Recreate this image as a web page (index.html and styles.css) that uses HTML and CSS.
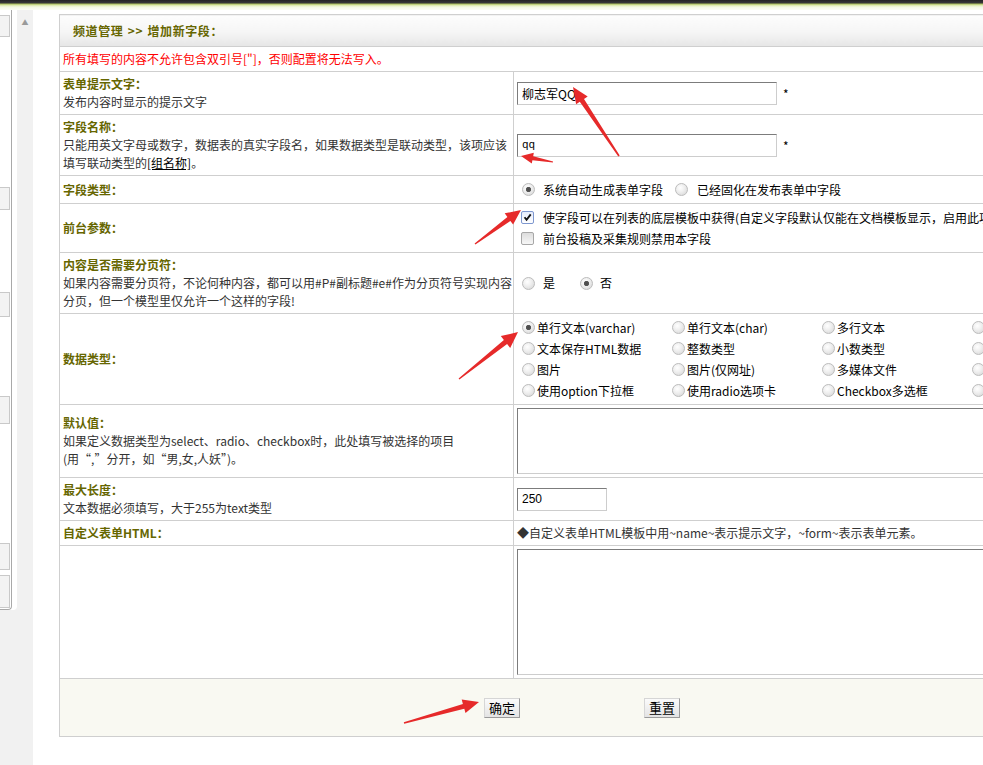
FILE: index.html
```html
<!DOCTYPE html>
<html lang="zh-CN">
<head>
<meta charset="utf-8">
<title>增加新字段</title>
<link rel="stylesheet" href="styles.css">
</head>
<body>
<div class="topbar"></div>
<div class="frame">
  <aside class="side">
    <div class="panel">
      <div class="panel-in">
        <span class="pbtn p1"></span>
        <span class="pbtn p2"></span>
        <span class="pbtn p3"></span>
        <span class="pbtn p4"></span>
        <span class="pbtn p5"></span>
        <span class="pbtn p6"></span>
      </div>
    </div>
    <div class="strip"><span class="up">▲</span></div>
  </aside>
  <main class="main">
    <table class="form">
      <colgroup><col class="c1"><col class="c2"></colgroup>
      <tr class="hd"><td colspan="2">频道管理 <span class="sep">&gt;&gt;</span> 增加新字段：</td></tr>
      <tr class="notice"><td colspan="2">所有填写的内容不允许包含双引号["]，否则配置将无法写入。</td></tr>
      <tr>
        <td><span class="lb">表单提示文字：</span><span class="ds">发布内容时显示的提示文字</span></td>
        <td><input class="txt" type="text" value="柳志军QQ"><span class="req">*</span></td>
      </tr>
      <tr>
        <td><span class="lb">字段名称：</span><span class="ds">只能用英文字母或数字，数据表的真实字段名，如果数据类型是联动类型，该项应该</span><span class="ds">填写联动类型的<a class="lnk" href="#">[组名称]</a>。</span></td>
        <td><input class="txt mono" type="text" value="qq"><span class="req">*</span></td>
      </tr>
      <tr>
        <td><span class="lb">字段类型：</span></td>
        <td>
          <div class="line">
            <input class="rd ft1" type="radio" name="ftype" checked><span>系统自动生成表单字段</span>
            <input class="rd ft2" type="radio" name="ftype"><span>已经固化在发布表单中字段</span>
          </div>
        </td>
      </tr>
      <tr>
        <td><span class="lb">前台参数：</span></td>
        <td>
          <div class="line"><span class="cb on"><svg viewBox="0 0 13 13" width="13" height="13"><path d="M3 6.2 L5.4 9.2 L10.3 2.8" stroke="#111" stroke-width="2.2" fill="none"/></svg></span><span class="nw">使字段可以在列表的底层模板中获得(自定义字段默认仅能在文档模板显示，启用此项会增加资源占用)</span></div>
          <div class="line"><span class="cb"></span><span>前台投稿及采集规则禁用本字段</span></div>
        </td>
      </tr>
      <tr>
        <td><span class="lb">内容是否需要分页符：</span><span class="ds">如果内容需要分页符，不论何种内容，都可以用#P#副标题#e#作为分页符号实现内容</span><span class="ds">分页，但一个模型里仅允许一个这样的字段!</span></td>
        <td>
          <div class="line">
            <input class="rd yn1" type="radio" name="page"><span>是</span>
            <input class="rd yn2" type="radio" name="page" checked><span>否</span>
          </div>
        </td>
      </tr>
      <tr>
        <td><span class="lb">数据类型：</span></td>
        <td>
          <div class="types">
            <label class="ty"><input class="rd" type="radio" name="dtype" checked>单行文本(varchar)</label>
            <label class="ty"><input class="rd" type="radio" name="dtype">单行文本(char)</label>
            <label class="ty"><input class="rd" type="radio" name="dtype">多行文本</label>
            <label class="ty"><input class="rd" type="radio" name="dtype">HTML文本</label>
            <label class="ty"><input class="rd" type="radio" name="dtype">文本保存HTML数据</label>
            <label class="ty"><input class="rd" type="radio" name="dtype">整数类型</label>
            <label class="ty"><input class="rd" type="radio" name="dtype">小数类型</label>
            <label class="ty"><input class="rd" type="radio" name="dtype">时间类型</label>
            <label class="ty"><input class="rd" type="radio" name="dtype">图片</label>
            <label class="ty"><input class="rd" type="radio" name="dtype">图片(仅网址)</label>
            <label class="ty"><input class="rd" type="radio" name="dtype">多媒体文件</label>
            <label class="ty"><input class="rd" type="radio" name="dtype">附件类型</label>
            <label class="ty"><input class="rd" type="radio" name="dtype">使用option下拉框</label>
            <label class="ty"><input class="rd" type="radio" name="dtype">使用radio选项卡</label>
            <label class="ty"><input class="rd" type="radio" name="dtype">Checkbox多选框</label>
            <label class="ty"><input class="rd" type="radio" name="dtype">联动类型</label>
          </div>
        </td>
      </tr>
      <tr>
        <td><span class="lb">默认值：</span><span class="ds">如果定义数据类型为select、radio、checkbox时，此处填写被选择的项目</span><span class="ds">(用“,”分开，如“男,女,人妖”)。</span></td>
        <td><textarea class="ta ta1"></textarea></td>
      </tr>
      <tr>
        <td><span class="lb">最大长度：</span><span class="ds">文本数据必须填写，大于255为text类型</span></td>
        <td><input class="txt short" type="text" value="250"></td>
      </tr>
      <tr>
        <td><span class="lb">自定义表单HTML：</span></td>
        <td><span class="ds">◆自定义表单HTML模板中用~name~表示提示文字，~form~表示表单元素。</span></td>
      </tr>
      <tr>
        <td></td>
        <td><textarea class="ta ta2"></textarea></td>
      </tr>
      <tr class="ft">
        <td colspan="2"><button class="btn" type="submit">确定</button><button class="btn reset" type="reset">重置</button></td>
      </tr>
    </table>
  </main>
</div>
<svg class="arrows" width="983" height="765" viewBox="0 0 983 765" aria-hidden="true">
  <polygon points="619.7,155.6 584.0,98.9 587.7,96.4 573,87 576.1,104.2 579.8,101.7 618.3,156.4"/>
  <polygon points="553.1,161.4 533.2,156.2 533.8,152.8 521,156 531.8,163.6 532.4,160.2 552.9,162.6"/>
  <polygon points="475.4,244.6 510.4,220.9 513.1,224.5 521,210 504.7,213.3 507.4,216.9 474.6,243.4"/>
  <polygon points="459.4,379.5 507.1,344.0 510.2,347.9 518,332 500.8,336.1 503.9,340.0 458.6,378.5"/>
  <polygon points="404.2,723.7 464.3,708.7 465.5,713.0 479,702 461.7,699.6 462.9,703.9 403.8,722.3"/>
</svg>
</body>
</html>
```
FILE: styles.css
```css
html, body {
  margin: 0;
  padding: 0;
}
body {
  width: 983px;
  height: 765px;
  overflow: hidden;
  position: relative;
  background: #fff;
  color: #333;
  font-family: "Noto Sans CJK SC", "Liberation Sans", sans-serif;
  font-size: 12px;
}

.topbar {
  height: 10px;
  background: linear-gradient(to bottom, #232323 0, #383838 3px, #a8bd57 4px, #d8e6a3 5px, #f3f8e2 7px, #fbfdf5 10px);
}

.frame {
  display: flex;
  height: 755px;
}

.side {
  width: 33px;
  flex: none;
  display: flex;
  align-items: flex-start;
  background: #f1f1f1;
}
.panel {
  width: 17px;
  height: 600px;
  background: #fff;
  border-bottom-right-radius: 4px;
}
.panel-in {
  width: 11px;
  height: 599px;
  border-right: 1px solid #a9a9a9;
  border-bottom: 1px solid #a9a9a9;
  border-bottom-right-radius: 4px;
  display: flex;
  flex-direction: column;
  align-items: flex-start;
}
.pbtn {
  display: block;
  width: 9px;
  border: 1px solid #c9c9c9;
  border-left: none;
  background: #f3f3f3;
}
.p1 { margin-top: 5px; height: 20px; }
.p2 { margin-top: 150px; height: 21px; }
.p3 { margin-top: 82px; height: 23px; }
.p4 { margin-top: 79px; height: 26px; }
.p5 { margin-top: 119px; height: 25px; }
.p6 { margin-top: 5px; height: 31px; }

.strip {
  width: 16px;
  text-align: center;
  padding-top: 1px;
}
.up {
  font-size: 7px;
  color: #9a9a9a;
  line-height: 10px;
}

.main {
  flex: 1;
  min-width: 0;
  padding: 4px 0 0 26px;
}

.form {
  width: 1100px;
  border-collapse: collapse;
  table-layout: fixed;
}
.c1 { width: 454px; }
.form td {
  border: 1px solid #cfcfcf;
  padding: 3px 3px;
  line-height: 18px;
  vertical-align: middle;
  white-space: nowrap;
  overflow: hidden;
}

.hd td {
  height: 23px;
  padding: 4px 13px;
  background: linear-gradient(to bottom, #fdfdfd 0%, #f5f5f5 55%, #e6e6e6 100%);
  color: #666600;
  font-weight: bold;
  letter-spacing: 0.6px;
}
.sep {
  margin: 0 1px;
}
.notice td {
  color: #f00;
}

.lb, .ds {
  display: block;
  height: 18px;
}
.lb {
  font-weight: bold;
  color: #666600;
}
.lnk {
  color: #000;
  text-decoration: underline;
}

.txt {
  width: 260px;
  height: 23px;
  box-sizing: border-box;
  margin: 0;
  padding: 0 4px;
  border: 1px solid;
  border-color: #7c7c7c #cdcdcd #cdcdcd #7c7c7c;
  font-family: "Noto Sans CJK SC", "Liberation Sans", sans-serif;
  font-size: 12px;
  color: #000;
  vertical-align: top;
}
.mono {
  font-family: "Liberation Mono", monospace;
  font-size: 11px;
}
.short {
  width: 90px;
  font-family: "Liberation Sans", sans-serif;
}
.req {
  margin-left: 6px;
  color: #000;
  vertical-align: top;
  line-height: 23px;
}

.line {
  display: flex;
  align-items: center;
  height: 21px;
  color: #000;
}
.nw { white-space: nowrap; }

.rd {
  appearance: none;
  -webkit-appearance: none;
  width: 13px;
  height: 13px;
  box-sizing: border-box;
  margin: 0 3px 0 5px;
  border: 1px solid #bdbdbd;
  border-radius: 50%;
  background: radial-gradient(circle at 40% 35%, #ffffff 0, #f0f0f0 40%, #d3d3d3 100%);
  flex: none;
}
.rd:checked {
  background: radial-gradient(circle, #4a4a4a 0, #555 2.2px, transparent 3px),
              radial-gradient(circle at 40% 35%, #ffffff 0, #f0f0f0 40%, #d3d3d3 100%);
}
.ft1 { margin-right: 8px; }
.ft2 { margin-left: 12px; margin-right: 9px; }
.yn1 { margin-right: 8px; }
.yn2 { margin-left: 25px; margin-right: 7px; }

.cb {
  width: 13px;
  height: 13px;
  box-sizing: border-box;
  margin: 0 9px 0 4px;
  border: 1px solid #a7a7a7;
  border-radius: 2px;
  background: linear-gradient(to bottom, #dcdcdc, #f7f7f7);
  display: flex;
  align-items: center;
  justify-content: center;
  flex: none;
}
.cb.on {
  border-color: #7e97cf;
  background: linear-gradient(to bottom, #e6ecfb, #ffffff);
}
.cb svg { display: block; }

.types {
  display: grid;
  grid-template-columns: repeat(4, 150px);
  grid-auto-rows: 21px;
  color: #000;
}
.ty {
  display: flex;
  align-items: center;
  white-space: nowrap;
}
.ty .rd { margin-right: 2px; }

.ta {
  display: block;
  box-sizing: border-box;
  width: 560px;
  margin: 0;
  border: 1px solid;
  border-color: #7c7c7c #cdcdcd #cdcdcd #7c7c7c;
  resize: none;
}
.ta1 { height: 66px; }
.ta2 { height: 126px; }

.ft td {
  height: 51px;
  background: #f9f9f2;
  padding-left: 424px;
}
.btn {
  height: 20px;
  width: 36px;
  padding: 0;
  margin: 0;
  border: 1px solid;
  border-color: #d6d6d6 #9a9a9a #9a9a9a #d6d6d6;
  background: linear-gradient(to bottom, #fbfbfb, #e4e4e4);
  color: #000;
  font-family: "Noto Sans CJK SC", sans-serif;
  font-size: 13px;
  line-height: 18px;
  vertical-align: middle;
}
.reset { margin-left: 124px; }

.arrows {
  position: absolute;
  left: 0;
  top: 0;
  pointer-events: none;
  fill: #e62a2a;
}
```
